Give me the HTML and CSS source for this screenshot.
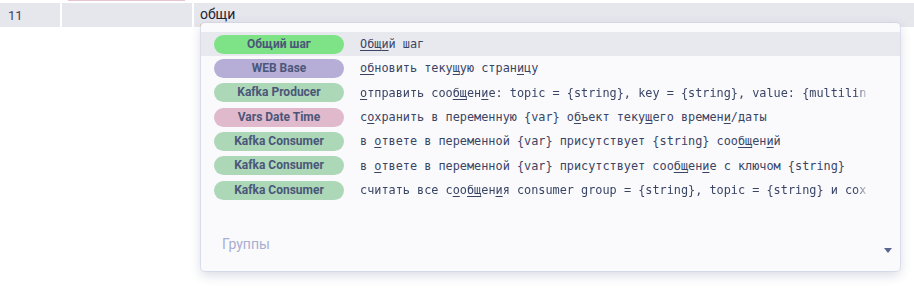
FILE: index.html
```html
<!DOCTYPE html>
<html lang="en">
<head>
    <meta charset="UTF-8">
    <title>Steps</title>
    <link rel="stylesheet" href="styles.css">
</head>
<body>

<div class="table">
    <div class="prev-row">
        <div class="prev-pill"></div>
    </div>
    <div class="row">
        <div class="cell cell-num">11</div>
        <div class="cell cell-tag"></div>
        <div class="cell cell-step"><span class="typo">общи</span></div>
    </div>
</div>

<div class="dropdown">
    <div class="list">
        <div class="item active">
            <span class="pill pill-common">Общий шаг</span>
            <span class="desc"><u>Общ</u><u>и</u>й шаг</span>
        </div>
        <div class="item">
            <span class="pill pill-web">WEB Base</span>
            <span class="desc"><u>об</u>новить теку<u>щ</u>ую стран<u>и</u>цу</span>
        </div>
        <div class="item">
            <span class="pill pill-kafka">Kafka Producer</span>
            <span class="desc fade"><u>о</u>тправить соо<u>бщ</u>ен<u>и</u>е: topic = {string}, key = {string}, value: {multilin</span>
        </div>
        <div class="item">
            <span class="pill pill-vars">Vars Date Time</span>
            <span class="desc">с<u>о</u>хранить в переменную {var} о<u>б</u>ъект теку<u>щ</u>его времен<u>и</u>/даты</span>
        </div>
        <div class="item">
            <span class="pill pill-kafka">Kafka Consumer</span>
            <span class="desc">в <u>о</u>твете в переменной {var} присутствует {string} соо<u>бщ</u>ен<u>и</u>й</span>
        </div>
        <div class="item">
            <span class="pill pill-kafka">Kafka Consumer</span>
            <span class="desc">в <u>о</u>твете в переменной {var} присутствует соо<u>бщ</u>ен<u>и</u>е с ключом {string}</span>
        </div>
        <div class="item">
            <span class="pill pill-kafka">Kafka Consumer</span>
            <span class="desc fade">считать все с<u>о</u>о<u>бщ</u>ен<u>и</u>я consumer group = {string}, topic = {string} и сох</span>
        </div>
    </div>
    <div class="footer">
        <span class="groups">Группы</span>
        <span class="caret"></span>
    </div>
</div>

</body>
</html>
```

FILE: styles.css
```css
body {
    margin: 0;
    background-color: #ffffff;
    font-family: Roboto, "Liberation Sans", sans-serif;
}
.prev-row {
    height: 3px;
}
.prev-pill {
    margin-left: 68px;
    width: 117px;
    height: 1px;
    background-color: #e8c3d2;
}
.row {
    display: flex;
    gap: 2px;
    height: 24px;
}
.cell {
    background-color: #e6e7ed;
    display: flex;
    align-items: center;
}
.cell-num {
    width: 52px;
    padding-left: 8px;
    font-size: 13px;
    color: #3d4461;
}
.cell-tag {
    width: 130px;
}
.cell-step {
    flex: 1;
    padding-left: 6px;
    font-size: 14px;
    color: #1f2333;
    padding-bottom: 2px;
}
.typo {
    text-decoration: underline wavy #f0a43a;
    text-decoration-thickness: 1px;
    text-underline-offset: 3px;
}
.dropdown {
    position: absolute;
    left: 201px;
    top: 23px;
    width: 699px;
    height: 248px;
    background-color: #fafafc;
    border-radius: 4px;
    box-shadow: 0 0 0 1px rgba(205, 208, 228, 0.6), 0 4px 12px rgba(60, 70, 120, 0.2);
    padding-top: 9px;
    box-sizing: border-box;
}
.item {
    display: flex;
    align-items: center;
    height: 24.33px;
    padding-left: 13px;
}
.item.active {
    background-color: #e8e9ee;
}
.pill {
    flex: none;
    width: 130px;
    height: 19px;
    line-height: 19px;
    border-radius: 10px;
    text-align: center;
    font-size: 12px;
    font-weight: bold;
    color: #4b5679;
}
.pill-common {
    background-color: #7ee287;
}
.pill-web {
    background-color: #b6aed6;
}
.pill-kafka {
    background-color: #acd8b8;
}
.pill-vars {
    background-color: #e0b9cc;
}
.desc {
    margin-left: 16px;
    white-space: nowrap;
    font-family: "DejaVu Sans Mono", "Liberation Mono", monospace;
    font-size: 11.85px;
    color: #3a4566;
}
.desc.fade {
    -webkit-mask-image: linear-gradient(to right, #000 98%, rgba(0, 0, 0, 0.3));
    mask-image: linear-gradient(to right, #000 98%, rgba(0, 0, 0, 0.3));
}
.desc u {
    text-underline-offset: 2px;
}
.footer {
    display: flex;
    justify-content: space-between;
    align-items: flex-start;
    padding: 32px 8px 0 21px;
}
.groups {
    font-size: 14px;
    line-height: 20px;
    color: #a8aed0;
}
.caret {
    margin-top: 14px;
    width: 0;
    height: 0;
    border-left: 4px solid transparent;
    border-right: 4px solid transparent;
    border-top: 5px solid #5a6690;
}
```
